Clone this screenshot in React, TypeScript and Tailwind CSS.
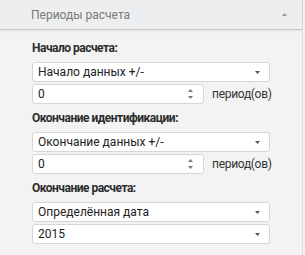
const font = { fontFamily: 'Roboto, "Liberation Sans", Arial, sans-serif' }

function Caret({ up = false, color = '#555' }: { up?: boolean; color?: string }) {
  return (
    <svg width="5" height="3" viewBox="0 0 5 3" className="block">
      <path d={up ? 'M0 3 L2.5 0 L5 3 Z' : 'M0 0 L5 0 L2.5 3 Z'} fill={color} />
    </svg>
  )
}

function Select({ value }: { value: string }) {
  return (
    <div className="flex items-center justify-between w-[238px] h-[20px] bg-white border border-[#d6d6d6] rounded-[3px] pl-[5px] pr-[9px]">
      <span className="text-[12px] leading-none text-[#222]">{value}</span>
      <Caret />
    </div>
  )
}

function NumberRow() {
  return (
    <div className="flex items-center gap-[8px]">
      <div className="flex items-center justify-between w-[172px] h-[20px] bg-white border border-[#d6d6d6] rounded-[3px] pl-[5px] pr-[10px]">
        <span className="text-[12px] leading-none text-[#222]">0</span>
        <div className="flex flex-col gap-[4px]">
          <Caret up color="#777" />
          <Caret color="#777" />
        </div>
      </div>
      <span className="text-[12px] leading-none text-[#333] tracking-[-0.3px]">период(ов)</span>
    </div>
  )
}

function Section({ label, children }: { label: string; children: React.ReactNode }) {
  return (
    <div className="flex flex-col">
      <div className="h-[16px] flex items-center text-[12px] font-bold text-[#2b2b2b] tracking-[-0.5px]">{label}</div>
      <div className="mt-[6px] flex flex-col gap-[2px]">{children}</div>
    </div>
  )
}

export default function App() {
  return (
    <div className="w-[305px] h-[255px] bg-[#f3f3f3] overflow-hidden" style={font}>
      <div className="w-[303px] h-full border-r border-[#dcdcdc]">
        <div className="h-[30px] flex items-center justify-between bg-[#eceef0] border-b border-[#c6c6c6] shadow-[0_1px_2px_rgba(0,0,0,0.08)] pl-[31px] pr-[15px]">
          <span className="text-[12px] text-[#7a7a7a]">Периоды расчета</span>
          <Caret up color="#9a9a9a" />
        </div>
        <div className="pl-[32px] pt-[10px] flex flex-col gap-[6px]">
          <Section label="Начало расчета:">
            <Select value="Начало данных +/-" />
            <NumberRow />
          </Section>
          <Section label="Окончание идентификации:">
            <Select value="Окончание данных +/-" />
            <NumberRow />
          </Section>
          <Section label="Окончание расчета:">
            <Select value="Определённая дата" />
            <Select value="2015" />
          </Section>
        </div>
      </div>
    </div>
  )
}
